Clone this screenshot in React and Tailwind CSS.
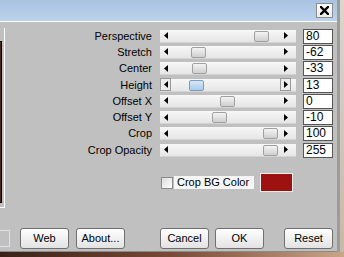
import React from 'react';

const rows = [
  { label: 'Perspective', value: '80', pos: 94 },
  { label: 'Stretch', value: '-62', pos: 31 },
  { label: 'Center', value: '-33', pos: 32 },
  { label: 'Height', value: '13', pos: 29, focused: true },
  { label: 'Offset X', value: '0', pos: 60 },
  { label: 'Offset Y', value: '-10', pos: 52 },
  { label: 'Crop', value: '100', pos: 103 },
  { label: 'Crop Opacity', value: '255', pos: 103 },
];

const Arrow = ({ dir }) => (
  <svg width="4" height="7" viewBox="0 0 4 7">
    {dir === 'left' ? <polygon points="4,0 4,7 0,3.5" fill="#000" /> : <polygon points="0,0 0,7 4,3.5" fill="#000" />}
  </svg>
);

const Slider = ({ pos, focused }) => (
  <div className="relative w-[136px] h-[13px] bg-gradient-to-b from-[#f7f7f7] to-[#e6e6e6] border-b border-[#d4d4d4] flex items-center justify-between">
    <div className={`w-[11px] h-[13px] flex items-center justify-center ${focused ? 'border border-[#9a9a9a] bg-[#ececec]' : ''}`}>
      <Arrow dir="left" />
    </div>
    <div className={`w-[11px] h-[13px] mr-[5px] flex items-center justify-center ${focused ? 'border border-[#9a9a9a] bg-[#ececec]' : ''}`}>
      <Arrow dir="right" />
    </div>
    <div
      className={`absolute top-[1px] w-[15px] h-[11px] rounded-[2px] border ${focused ? 'border-[#7f9db9] bg-gradient-to-b from-[#d6e8f8] to-[#a8cbec]' : 'border-[#a0a0a0] bg-gradient-to-b from-[#f4f4f4] to-[#cfcfcf]'}`}
      style={{ left: pos }}
    />
  </div>
);

const Button = ({ children, className = '' }) => (
  <div className={`w-[49px] h-[21px] rounded-[3px] border border-[#707070] bg-gradient-to-b from-white to-[#e2e2e2] flex items-center justify-center text-[11px] text-black ${className}`}>
    {children}
  </div>
);

export default function App() {
  return (
    <div className="w-[344px] h-[257px] overflow-hidden flex flex-col" style={{ fontFamily: '"Liberation Sans", Arial, sans-serif' }}>
      <div className="flex h-[252px]">
        {/* dialog */}
        <div className="w-[337px] h-full flex flex-col bg-[#c0c0c0] border-b border-[#8a8a8a]">
          <div className="h-[21px] bg-gradient-to-b from-[#a9c3e2] to-[#bcd3ec] flex items-center justify-end pr-[4px]">
            <div className="w-[17px] h-[15px] bg-gradient-to-b from-white to-[#ececec] border border-[#8c8c8c] flex items-center justify-center">
              <svg width="9" height="9" viewBox="0 0 9 9">
                <path d="M1 1 L8 8 M8 1 L1 8" stroke="#000" strokeWidth="2.4" strokeLinecap="square" />
              </svg>
            </div>
          </div>
          <div className="h-[1px] bg-white" />

          <div className="flex">
            {/* preview cut off at left */}
            <div className="w-[5px] mt-[6px] h-[180px] border-r border-b border-white">
              <div className="mt-[13px] w-[2px] h-[162px] border-r border-t border-b border-black bg-[#4a2418]" />
            </div>

            <div className="flex flex-col pt-[6px]">
              {rows.map((r) => (
                <div key={r.label} className="flex items-center h-[16.3px]">
                  <div className="w-[148px] text-right text-[11px] text-black leading-none pr-[1px]">{r.label}</div>
                  <div className="ml-[7px]">
                    <Slider pos={r.pos} focused={r.focused} />
                  </div>
                  <div className="ml-[7px] w-[30px] h-[15px] bg-white border border-[#555] text-[12px] leading-[13px] pl-[2px] text-black">
                    {r.value}
                  </div>
                </div>
              ))}

              <div className="flex items-center mt-[15px] ml-[156px]">
                <div className="w-[12px] h-[12px] border border-[#8a8a8a] bg-gradient-to-br from-[#dcdcdc] to-white" />
                <div className="ml-[1px] px-[3px] h-[13px] w-[80px] bg-[#f6f6f6] text-[11px] leading-[13px] text-black">Crop BG Color</div>
                <div className="ml-[6px] w-[33px] h-[19px] border border-[#eeeeee] bg-[#9e1111]" />
              </div>
            </div>
          </div>

          <div className="mt-auto mb-[2px] flex items-center">
            <div className="w-[10px] h-[17px] border border-l-0 border-[#e2e2e2]" />
            <Button className="ml-[10px]">Web</Button>
            <Button className="ml-[7px]">About...</Button>
            <Button className="ml-[35px]">Cancel</Button>
            <Button className="ml-[6px]">OK</Button>
            <Button className="ml-[20px]">Reset</Button>
          </div>
        </div>
        {/* desktop edge */}
        <div className="flex-1 border-l-[3px] border-[#9c9c9c] bg-gradient-to-b from-[#dcd6ce] to-[#c9b8a6]" />
      </div>
      <div className="flex-1 bg-gradient-to-r from-[#3a2117] via-[#7a4a36] to-[#c9a688]" />
    </div>
  );
}
